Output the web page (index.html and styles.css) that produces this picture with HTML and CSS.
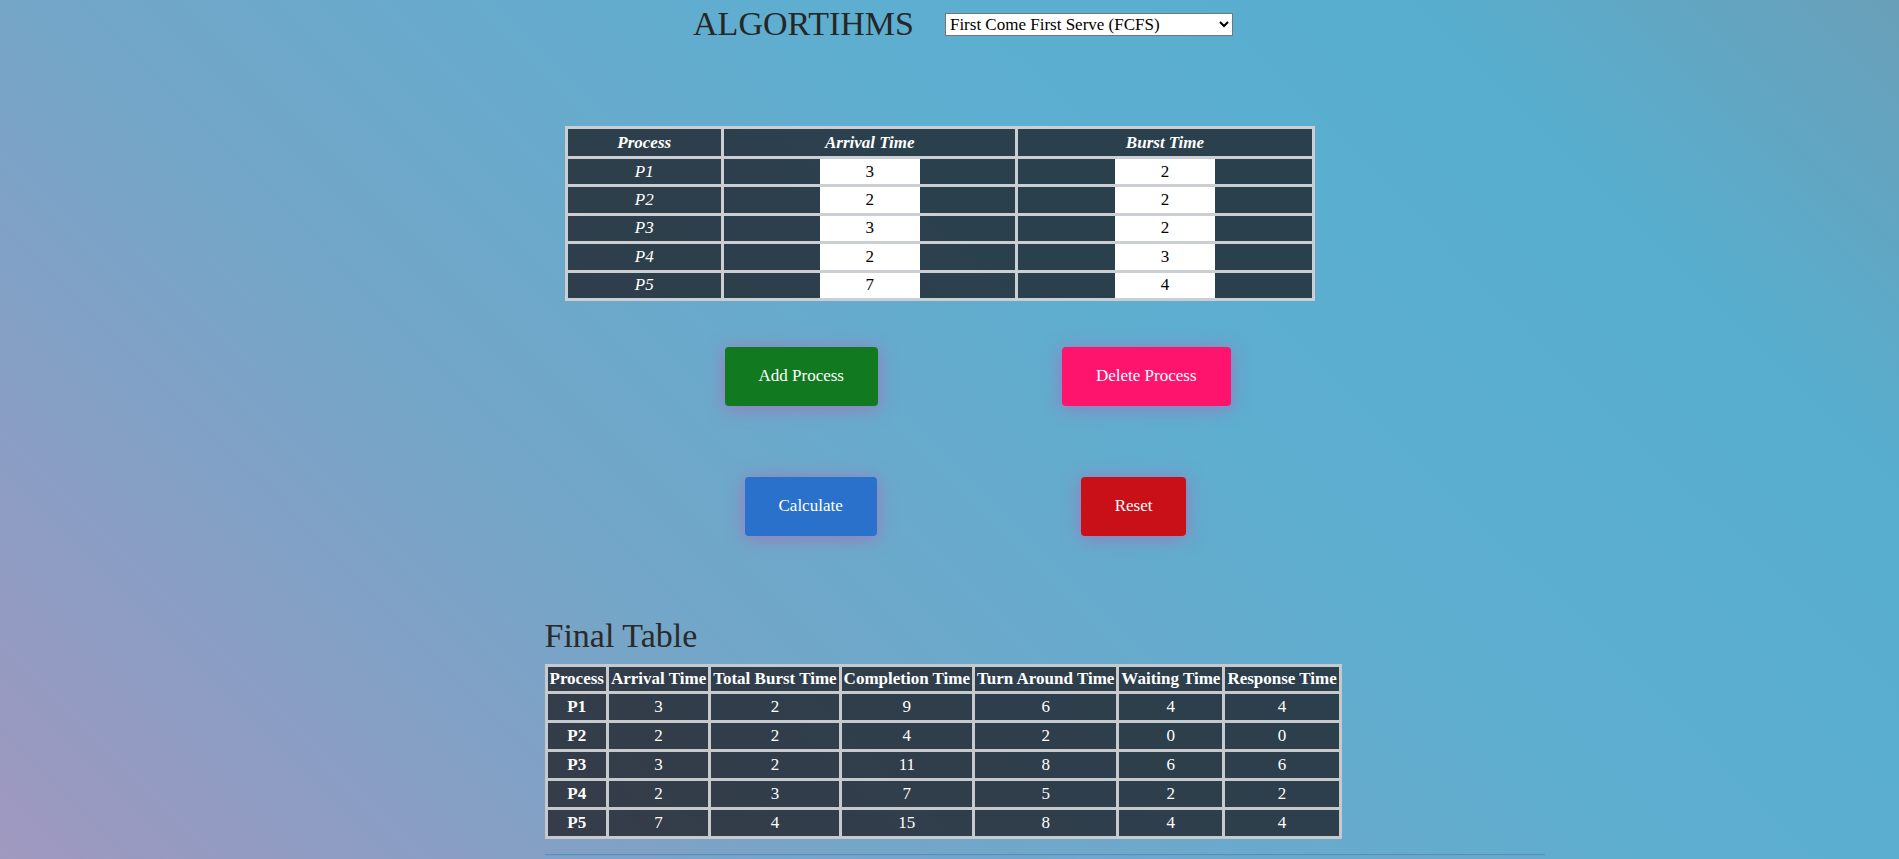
FILE: index.html
```html
<!DOCTYPE html>
<html lang="en">
<head>
<meta charset="utf-8">
<title>CPU Scheduling Algorithms</title>
<link rel="stylesheet" href="styles.css">
</head>
<body>
  <header class="topbar">
    <h1 class="title">ALGORTIHMS</h1>
    <select class="algo-select">
      <option>First Come First Serve (FCFS)</option>
      <option>Shortest Job First (SJF)</option>
      <option>Round Robin (RR)</option>
    </select>
  </header>

  <main class="content">
    <table class="input-table">
      <thead>
        <tr><th class="c-proc">Process</th><th class="c-arr">Arrival Time</th><th class="c-burst">Burst Time</th></tr>
      </thead>
      <tbody>
        <tr><td class="pname">P1</td><td><input class="num" type="text" value="3"></td><td><input class="num" type="text" value="2"></td></tr>
        <tr><td class="pname">P2</td><td><input class="num" type="text" value="2"></td><td><input class="num" type="text" value="2"></td></tr>
        <tr><td class="pname">P3</td><td><input class="num" type="text" value="3"></td><td><input class="num" type="text" value="2"></td></tr>
        <tr><td class="pname">P4</td><td><input class="num" type="text" value="2"></td><td><input class="num" type="text" value="3"></td></tr>
        <tr><td class="pname">P5</td><td><input class="num" type="text" value="7"></td><td><input class="num" type="text" value="4"></td></tr>
      </tbody>
    </table>

    <div class="btn-row row-one">
      <button class="btn btn-add">Add Process</button>
      <button class="btn btn-delete">Delete Process</button>
    </div>
    <div class="btn-row row-two">
      <button class="btn btn-calc">Calculate</button>
      <button class="btn btn-reset">Reset</button>
    </div>
  </main>

  <section class="result">
    <h2 class="result-title">Final Table</h2>
    <table class="final-table">
      <thead>
        <tr><th>Process</th><th>Arrival Time</th><th>Total Burst Time</th><th>Completion Time</th><th>Turn Around Time</th><th>Waiting Time</th><th>Response Time</th></tr>
      </thead>
      <tbody>
        <tr><th>P1</th><td>3</td><td>2</td><td>9</td><td>6</td><td>4</td><td>4</td></tr>
        <tr><th>P2</th><td>2</td><td>2</td><td>4</td><td>2</td><td>0</td><td>0</td></tr>
        <tr><th>P3</th><td>3</td><td>2</td><td>11</td><td>8</td><td>6</td><td>6</td></tr>
        <tr><th>P4</th><td>2</td><td>3</td><td>7</td><td>5</td><td>2</td><td>2</td></tr>
        <tr><th>P5</th><td>7</td><td>4</td><td>15</td><td>8</td><td>4</td><td>4</td></tr>
      </tbody>
    </table>
    <hr class="divider">
  </section>
</body>
</html>
```

FILE: styles.css
```css
html {
  height: 100%;
  overflow: hidden;
  background: linear-gradient(45deg, #a098bf 0%, #8b9dc4 15%, #74a6c8 32%, #5eaed0 60%, #57aecf 82%, #6a9fb8 100%);
}

body {
  margin: 0;
  font-family: "Liberation Serif", "Times New Roman", serif;
  color: #222;
}

.topbar {
  display: flex;
  justify-content: center;
  align-items: center;
  gap: 31px;
  padding-top: 5px;
  padding-left: 27px;
}

.title {
  margin: 0;
  font-size: 34px;
  font-weight: normal;
  color: #262626;
}

.algo-select {
  margin-top: 0;
  width: 288px;
  height: 23px;
  font-family: "Liberation Serif", "Times New Roman", serif;
  font-size: 17px;
  background: #fff;
  color: #000;
  border: 1px solid #767676;
  border-radius: 0;
}

.content {
  width: 750px;
  margin-left: calc(50% - 385px);
}

.input-table {
  margin-top: 83px;
  width: 750px;
  table-layout: fixed;
  border-collapse: collapse;
  font-size: 17px;
}

.input-table th,
.input-table td {
  border: 3px solid #cbcfd3;
  background: rgba(22, 17, 22, 0.7);
  color: #fff;
  text-align: center;
  font-style: italic;
}

.input-table th {
  padding: 3.5px 2px;
  font-weight: bold;
}

.input-table td {
  padding: 0;
  height: 25.4px;
}

.c-proc { width: 20.6%; }
.c-arr { width: 39.6%; }
.c-burst { width: 39.8%; }

.num {
  display: block;
  margin: 0 auto;
  box-sizing: border-box;
  width: 100px;
  height: 25.4px;
  border: none;
  padding: 0;
  background: #fff;
  color: #000;
  text-align: center;
  font-family: "Liberation Serif", "Times New Roman", serif;
  font-size: 17px;
}

.btn-row {
  display: flex;
}

.row-one {
  margin-top: 46px;
  padding-left: 160px;
  gap: 184px;
}

.row-two {
  margin-top: 71px;
  padding-left: 180px;
  gap: 204px;
}

.btn {
  padding: 19.5px 34px;
  border: none;
  border-radius: 4px;
  color: #fff;
  font-family: "Liberation Serif", "Times New Roman", serif;
  font-size: 17px;
  line-height: normal;
  box-shadow: 0 2px 18px rgba(195, 80, 175, 0.55);
}

.btn-add { background: #117a20; }
.btn-delete { background: #fe136d; }
.btn-calc { background: #2a71cc; }
.btn-reset { background: #c90f18; }

.result {
  width: 1000px;
  margin-left: calc(50% - 405px);
}

.result-title {
  margin: 81px 0 0;
  font-size: 34px;
  font-weight: normal;
  color: #2a2a2a;
}

.final-table {
  margin-top: 9px;
  border-collapse: collapse;
  font-size: 17px;
}

.final-table th,
.final-table td {
  border: 3px solid #c6cacd;
  background: rgba(22, 17, 22, 0.7);
  color: #fff;
  text-align: center;
  padding: 3px 2px;
}

.final-table thead th {
  padding: 2.25px 2px;
}

.divider {
  margin: 15px 0 0;
  width: 1000px;
  border: none;
  border-top: 1px solid #5a8dbd;
  border-bottom: 1px solid #6ea2c9;
}
```
